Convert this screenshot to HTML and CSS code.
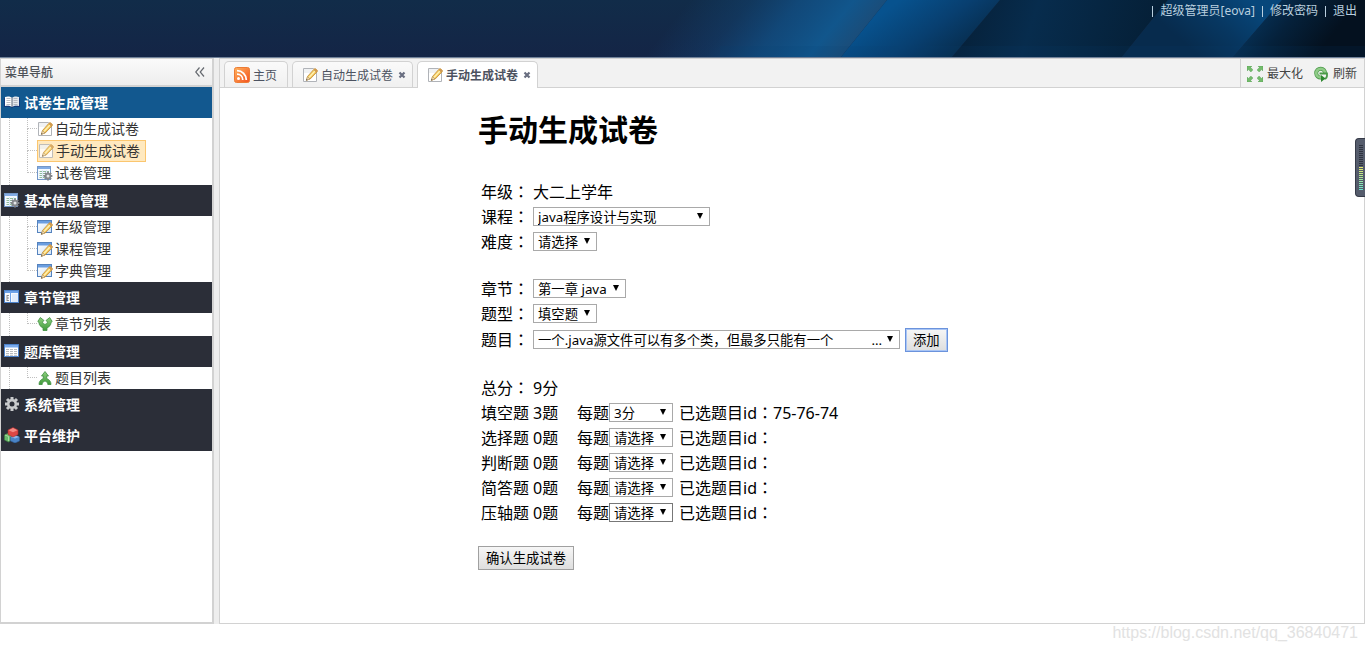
FILE: index.html
```html
<!DOCTYPE html>
<html lang="zh-CN">
<head>
<meta charset="utf-8">
<title>手动生成试卷</title>
<link rel="stylesheet" href="styles.css">
</head>
<body>
<svg class="defs" aria-hidden="true">
  <defs>
    <linearGradient id="g-pencil" x1="0" y1="0" x2="1" y2="1"><stop offset="0" stop-color="#ffe98a"/><stop offset="1" stop-color="#e9a52c"/></linearGradient>
    <linearGradient id="g-green" x1="0" y1="0" x2="0" y2="1"><stop offset="0" stop-color="#8fd07f"/><stop offset="1" stop-color="#3f9a3a"/></linearGradient>
    <linearGradient id="g-rss" x1="0" y1="0" x2="1" y2="1"><stop offset="0" stop-color="#ffb45e"/><stop offset="1" stop-color="#f4511e"/></linearGradient>
    <linearGradient id="g-win" x1="0" y1="0" x2="1" y2="1"><stop offset="0" stop-color="#ffffff"/><stop offset="1" stop-color="#cfe2f7"/></linearGradient>
    <symbol id="pencil" viewBox="0 0 16 16">
      <path d="M5.500 10.500 12 3.200c.6-.6 1.300-.6 2 0l.9.9c.6.6.6 1.200 0 1.900L8.200 13 4.500 14.200z" fill="url(#g-pencil)" stroke="#c08a35" stroke-width=".8"/>
      <path d="m7 11.500 6-6.500" stroke="#fff3b5" stroke-width="1.200"/>
      <path d="m11.500 3.800 2.700 2.700.9-1c.4-.5.4-1 0-1.400l-1.100-1.100c-.5-.5-1.100-.5-1.600 0z" fill="#d09a50"/>
      <path d="m5.500 10.700 2.500 2.200-3.700 1.500z" fill="#f3dcae" stroke="#a58a62" stroke-width=".5"/>
      <path d="m4.100 14.600.6-1.500 1 .9z" fill="#444"/>
    </symbol>
    <symbol id="i-note" viewBox="0 0 16 16">
      <path d="M1.500 1.500h10l3 3v10h-13z" fill="#fff" stroke="#b0b3b8"/>
      <path d="M2 2h9v4H2z" fill="#f0f2f4"/>
      <use href="#pencil" x="0" y="-1" width="16" height="16"/>
    </symbol>
    <symbol id="i-form" viewBox="0 0 16 16">
      <rect x=".5" y="1.500" width="14" height="12" fill="url(#g-win)" stroke="#5583be"/>
      <path d="M1 2h13v2.500H1z" fill="#6b9ee0"/>
      <use href="#pencil" x="0" y="1" width="16" height="16"/>
    </symbol>
    <symbol id="cog" viewBox="0 0 16 16">
      <g stroke="currentColor" stroke-width="3"><path d="M8 1v14M1 8h14M3 3l10 10M13 3 3 13"/></g>
      <circle cx="8" cy="8" r="5" fill="currentColor"/>
    </symbol>
    <symbol id="i-sheet" viewBox="0 0 16 16">
      <rect x=".5" y="1.500" width="13" height="13" fill="#f4f9ff" stroke="#7397c8"/>
      <path d="M1 2h12v2H1z" fill="#82ace5"/>
      <path d="M2.500 6.500h9.500M2.500 8.500h9.500M2.500 10.500h7M2.500 12.500h7" stroke="#8fbb9c"/>
      <path d="M5.500 5v9M9.500 5v9" stroke="#dce8f6"/>
      <svg x="6" y="6" width="10" height="10" viewBox="0 0 16 16" color="#84878b"><use href="#cog"/></svg>
      <circle cx="11" cy="11" r="1.500" fill="#e5e7e9"/>
    </symbol>
    <symbol id="i-book" viewBox="0 0 16 16">
      <path d="M0 4h16v9H9.500L8 14.200 6.500 13H0z" fill="#123b7c"/>
      <path d="M1 3c3-1 5-.5 7 .8V13c-2-1.300-4-1.600-7-1z" fill="#fff"/>
      <path d="M15 3c-3-1-5-.5-7 .8V13c2-1.300 4-1.600 7-1z" fill="#e4e8ee"/>
      <path d="M2.500 4.500h4M2.500 6.500h4M2.500 8.500h4M2.500 10.500h4M9.500 4.500h4M9.500 6.500h4M9.500 8.500h4M9.500 10.500h4" stroke="#a9adb5" stroke-width=".8"/>
      <path d="M8 3.500V13" stroke="#596577"/>
    </symbol>
    <symbol id="i-panes" viewBox="0 0 16 16">
      <rect x=".5" y="1.500" width="14" height="12" fill="#f5f9ff" stroke="#4d83cb"/>
      <path d="M1 2h13v2H1z" fill="#6da2e8"/><path d="M6.500 4v9" stroke="#6da2e8"/>
      <path d="M3 6v6M3 6.500h2M3 9h2M3 11.500h2" stroke="#777" stroke-width=".8"/>
      <path d="M8 5h6v8H8z" fill="#dfebfb"/>
    </symbol>
    <symbol id="i-table" viewBox="0 0 16 16">
      <rect x=".5" y="1.500" width="14" height="12" fill="#fff" stroke="#4d83cb"/>
      <path d="M1 2h13v2.500H1z" fill="#79aaec"/>
      <path d="M2 6.500h11M2 8.500h11M2 10.500h11M2 12.300h11" stroke="#a6a9ad" stroke-width=".8"/>
      <path d="M5.500 5v8M9.500 5v8" stroke="#fff"/>
    </symbol>
    <symbol id="i-split" viewBox="0 0 16 16">
      <path d="M6 14.500V11.800C3.500 10.800 2 9 2 6.500L.8 5.500 3.300 1.500 7 4.500 5.500 6c.2 1.200 1 2 2.500 2.400 1.500-.4 2.300-1.200 2.500-2.400L9 4.500l3.700-3 2.500 4L14 6.500c0 2.500-1.500 4.300-4 5.300v2.700z" fill="url(#g-green)" stroke="#3f8f40" stroke-width=".8"/>
    </symbol>
    <symbol id="i-join" viewBox="0 0 16 16">
      <path d="M8 1.500 11.500 6H9.700v2.500c2.600 1.100 4.300 3 4.300 6h-3.200c0-1.800-1.100-3-2.800-3.500-1.700.5-2.800 1.700-2.800 3.500H2c0-3 1.700-4.900 4.300-6V6H4.500z" fill="url(#g-green)" stroke="#3f8f40" stroke-width=".8"/>
    </symbol>
    <symbol id="i-gear" viewBox="0 0 16 16">
      <svg width="16" height="16" viewBox="0 0 16 16" color="#c9cbcd"><use href="#cog"/></svg>
      <circle cx="8" cy="8" r="2.500" fill="#2b2e38"/>
    </symbol>
    <symbol id="i-cubes" viewBox="0 0 16 16">
      <path d="m.5 8 4-2 3 2v5l-3 2-4-2z" fill="#69b96b" stroke="#3c843f" stroke-width=".6"/>
      <path d="m6.500 10 4.500-2 4.500 2v4L11 16l-4.500-2z" fill="#4a83c6" stroke="#2c5d9a" stroke-width=".6"/><path d="m6.800 10 4.200 1.500 4.200-1.500L11 8.300z" fill="#8eb7e8"/>
      <path d="m4 3 5-2.500L14 3v4.500l-5 2.500-5-2.500z" fill="#dc4744" stroke="#a92d30" stroke-width=".6"/><path d="m4.500 3.200 4.500 2 4.500-2L9 1z" fill="#f38a83"/>
      <path d="m1 8 3.500 1.500V14" fill="none" stroke="#b5e0ac" stroke-width=".8"/>
    </symbol>
    <symbol id="i-rss" viewBox="0 0 16 16">
      <rect x=".5" y=".5" width="15" height="15" rx="2" fill="url(#g-rss)" stroke="#ec7c35"/>
      <circle cx="4.500" cy="11.500" r="1.500" fill="#fff"/>
      <path d="M3 7.200c3.300 0 5.800 2.500 5.800 5.800M3 3.700c5.200 0 9.300 4.100 9.300 9.300" fill="none" stroke="#fff" stroke-width="1.800"/>
    </symbol>
    <symbol id="arrow-out" viewBox="0 0 6 6"><path d="M0 0h5L3.600 1.400 6 3.800 3.900 6 1.500 3.600 0 5z" fill="#74bb6c" stroke="#4c9a4c" stroke-width=".4"/></symbol>
    <symbol id="i-max" viewBox="0 0 16 16">
      <use href="#arrow-out" width="6" height="6"/>
      <use href="#arrow-out" width="6" height="6" transform="translate(16 0) rotate(90)"/>
      <use href="#arrow-out" width="6" height="6" transform="translate(16 16) rotate(180)"/>
      <use href="#arrow-out" width="6" height="6" transform="translate(0 16) rotate(270)"/>
    </symbol>
    <symbol id="i-refresh" viewBox="0 0 16 16">
      <path d="M12 7.500A4.400 4.400 0 1 0 8 11.500" fill="none" stroke="#4b9a49" stroke-width="4"/>
      <path d="M12 7.500A4.400 4.400 0 1 0 8 11.500" fill="none" stroke="#8fcb87" stroke-width="2.600"/>
      <path d="M6.500 7.500h7.500V9.500c0 1.800-1 3-2.500 3.500" fill="none" stroke="#4b9a49" stroke-width="1.800"/>
      <path d="M8 9 12.500 12.500 8 16z" fill="#2e8730"/>
    </symbol>
    <symbol id="i-close" viewBox="0 0 8 8"><path d="m1.500 1.500 5 5m0-5-5 5" stroke="#696e80" stroke-width="2.200"/></symbol>
    <symbol id="i-down" viewBox="0 0 8 8"><path d="M1 1h6L4 7z" fill="#000"/></symbol>
  </defs>
</svg>

<header class="banner">
  <svg class="banner__art" viewBox="0 0 1365 57" preserveAspectRatio="xMaxYMid slice" aria-hidden="true">
    <defs>
      <linearGradient id="b0" x1="0" y1="0" x2="0" y2="1"><stop offset="0" stop-color="#112c49"/><stop offset="1" stop-color="#142546"/></linearGradient>
      <linearGradient id="b1" gradientUnits="userSpaceOnUse" x1="690" y1="0" x2="811" y2="98"><stop offset="0" stop-color="#124c80" stop-opacity="0"/><stop offset=".3" stop-color="#124c80" stop-opacity=".35"/><stop offset=".55" stop-color="#114f84" stop-opacity=".8"/><stop offset=".82" stop-color="#11568c"/><stop offset="1" stop-color="#1b4c78"/></linearGradient>
      <linearGradient id="b2" gradientUnits="userSpaceOnUse" x1="900" y1="0" x2="945" y2="62"><stop offset="0" stop-color="#07528e"/><stop offset=".55" stop-color="#083f70"/><stop offset="1" stop-color="#072e50"/></linearGradient>
      <linearGradient id="b3" gradientUnits="userSpaceOnUse" x1="970" y1="0" x2="1150" y2="57"><stop offset="0" stop-color="#06213a"/><stop offset=".35" stop-color="#072c4d"/><stop offset="1" stop-color="#051f36"/></linearGradient>
      <linearGradient id="b4" gradientUnits="userSpaceOnUse" x1="1250" y1="0" x2="1200" y2="57"><stop offset="0" stop-color="#07477b"/><stop offset=".5" stop-color="#073761"/><stop offset="1" stop-color="#072b4d"/></linearGradient>
      <linearGradient id="b5" gradientUnits="userSpaceOnUse" x1="1262" y1="0" x2="1322" y2="48"><stop offset="0" stop-color="#06335a"/><stop offset=".45" stop-color="#05213b"/><stop offset="1" stop-color="#04111f"/></linearGradient>
    </defs>
    <path d="M0 0h1365v57H0z" fill="url(#b0)"/>
    <path d="M620 0h267l-46 57H620z" fill="url(#b1)"/>
    <path d="M887 0h113l-48 57H841z" fill="url(#b2)"/>
    <path d="M1000 0h168l-46 57H952z" fill="url(#b3)"/>
    <path d="M1168 0h114l-49 57h-111z" fill="url(#b4)"/>
    <path d="M1282 0h83v57h-132z" fill="url(#b5)"/>
    <path d="M720 46h645v11H720z" fill="#0b4370" opacity=".12"/>
  </svg>
  <nav class="account">
    <a href="#">超级管理员[eova]</a>
    <a href="#">修改密码</a>
    <a href="#">退出</a>
  </nav>
</header>

<div class="layout">
  <aside class="sidebar">
    <div class="sidebar__head">
      <span>菜单导航</span>
      <button class="collapse" type="button" aria-label="收起菜单"><svg viewBox="0 0 10 10" width="10" height="10"><path d="M4.500.5.700 5l3.800 4.500M9 .5 5.200 5 9 9.500" fill="none" stroke="#666a70" stroke-width="1.200"/></svg></button>
    </div>
    <section class="group">
      <h2 class="group__title group__title--active"><svg class="icon"><use href="#i-book"/></svg>试卷生成管理</h2>
      <ul class="tree">
        <li><a href="#"><svg class="icon"><use href="#i-note"/></svg>自动生成试卷</a></li>
        <li><a class="selected" href="#"><svg class="icon"><use href="#i-note"/></svg>手动生成试卷</a></li>
        <li><a href="#"><svg class="icon"><use href="#i-sheet"/></svg>试卷管理</a></li>
      </ul>
    </section>
    <section class="group">
      <h2 class="group__title"><svg class="icon"><use href="#i-sheet"/></svg>基本信息管理</h2>
      <ul class="tree">
        <li><a href="#"><svg class="icon"><use href="#i-form"/></svg>年级管理</a></li>
        <li><a href="#"><svg class="icon"><use href="#i-form"/></svg>课程管理</a></li>
        <li><a href="#"><svg class="icon"><use href="#i-form"/></svg>字典管理</a></li>
      </ul>
    </section>
    <section class="group">
      <h2 class="group__title"><svg class="icon"><use href="#i-panes"/></svg>章节管理</h2>
      <ul class="tree">
        <li><a href="#"><svg class="icon"><use href="#i-split"/></svg>章节列表</a></li>
      </ul>
    </section>
    <section class="group">
      <h2 class="group__title"><svg class="icon"><use href="#i-table"/></svg>题库管理</h2>
      <ul class="tree">
        <li><a href="#"><svg class="icon"><use href="#i-join"/></svg>题目列表</a></li>
      </ul>
    </section>
    <section class="group"><h2 class="group__title"><svg class="icon"><use href="#i-gear"/></svg>系统管理</h2></section>
    <section class="group"><h2 class="group__title"><svg class="icon"><use href="#i-cubes"/></svg>平台维护</h2></section>
  </aside>

  <main class="main">
    <div class="tabbar">
      <div class="tabs">
        <a class="tab" href="#"><svg class="icon"><use href="#i-rss"/></svg>主页</a>
        <a class="tab" href="#"><svg class="icon"><use href="#i-note"/></svg>自动生成试卷<svg class="close"><use href="#i-close"/></svg></a>
        <a class="tab tab--active" href="#"><svg class="icon"><use href="#i-note"/></svg>手动生成试卷<svg class="close"><use href="#i-close"/></svg></a>
      </div>
      <div class="tools">
        <button type="button"><svg class="icon"><use href="#i-max"/></svg>最大化</button>
        <button type="button"><svg class="icon"><use href="#i-refresh"/></svg>刷新</button>
      </div>
    </div>

    <form class="paper">
      <h1>手动生成试卷</h1>
      <div class="block">
        <div class="row"><span class="label">年级<span class="colon" lang="zh-TW">：</span></span>大二上学年</div>
        <div class="row"><label class="label" for="course">课程<span class="colon" lang="zh-TW">：</span></label><span class="pick pick--course"><select id="course"><option>java程序设计与实现</option></select><svg><use href="#i-down"/></svg></span></div>
        <div class="row"><label class="label" for="level">难度<span class="colon" lang="zh-TW">：</span></label><span class="pick"><select id="level"><option>请选择</option></select><svg><use href="#i-down"/></svg></span></div>
      </div>
      <div class="block block--question">
        <div class="row"><label class="label" for="chapter">章节<span class="colon" lang="zh-TW">：</span></label><span class="pick pick--chapter"><select id="chapter"><option>第一章 java</option></select><svg><use href="#i-down"/></svg></span></div>
        <div class="row"><label class="label" for="kind">题型<span class="colon" lang="zh-TW">：</span></label><span class="pick"><select id="kind"><option>填空题</option></select><svg><use href="#i-down"/></svg></span></div>
        <div class="row"><label class="label" for="question">题目<span class="colon" lang="zh-TW">：</span></label><span class="pick pick--question"><select id="question"><option>一个.java源文件可以有多个类，但最多只能有一个&nbsp;&nbsp;&nbsp;&nbsp;&nbsp;&nbsp;&nbsp;&nbsp;&nbsp;&nbsp;&nbsp;...</option></select><svg><use href="#i-down"/></svg></span><button class="btn btn--focus" type="button">添加</button></div>
      </div>
      <div class="block block--totals">
        <div class="row"><span class="label">总分<span class="colon" lang="zh-TW">：</span></span>9分</div>
        <div class="row"><span class="label">填空题</span><span class="count">3题</span><label for="s1">每题</label><span class="pick"><select id="s1"><option>3分</option></select><svg><use href="#i-down"/></svg></span><span class="ids">已选题目id<span class="colon" lang="zh-TW">：</span>75-76-74</span></div>
        <div class="row"><span class="label">选择题</span><span class="count">0题</span><label for="s2">每题</label><span class="pick"><select id="s2"><option>请选择</option></select><svg><use href="#i-down"/></svg></span><span class="ids">已选题目id<span class="colon" lang="zh-TW">：</span></span></div>
        <div class="row"><span class="label">判断题</span><span class="count">0题</span><label for="s3">每题</label><span class="pick"><select id="s3"><option>请选择</option></select><svg><use href="#i-down"/></svg></span><span class="ids">已选题目id<span class="colon" lang="zh-TW">：</span></span></div>
        <div class="row"><span class="label">简答题</span><span class="count">0题</span><label for="s4">每题</label><span class="pick"><select id="s4"><option>请选择</option></select><svg><use href="#i-down"/></svg></span><span class="ids">已选题目id<span class="colon" lang="zh-TW">：</span></span></div>
        <div class="row"><span class="label">压轴题</span><span class="count">0题</span><label for="s5">每题</label><span class="pick pick--dark"><select id="s5"><option>请选择</option></select><svg><use href="#i-down"/></svg></span><span class="ids">已选题目id<span class="colon" lang="zh-TW">：</span></span></div>
      </div>
      <button class="btn" type="button">确认生成试卷</button>
    </form>
  </main>
</div>

<footer class="credit">https://blog.csdn.net/qq_36840471</footer>
<div class="meter" aria-hidden="true"><i class="meter__off"></i><i class="meter__on"></i></div>
</body>
</html>
```
FILE: styles.css
```css
* { box-sizing: border-box; }

body {
  display: flex;
  flex-direction: column;
  min-height: 100vh;
  margin: 0;
  background: #fff;
  color: #000;
  font-family: "Noto Sans", "Noto Sans CJK SC", sans-serif;
  font-size: 16px;
}

a { color: inherit; text-decoration: none; }
button, select { font-family: inherit; color: inherit; }
h1, h2, ul { margin: 0; padding: 0; }
ul { list-style: none; }

.defs { position: absolute; width: 0; height: 0; }
.icon { flex: none; width: 16px; height: 16px; }

/* Banner */
.banner {
  position: relative;
  height: 58px;
  border-bottom: 1px solid #71829a;
  background: #122a49;
  overflow: hidden;
}
.banner__art { position: absolute; inset: 0; width: 100%; height: 100%; }
.account {
  position: relative;
  display: flex;
  justify-content: flex-end;
  padding: 2px 8px 0 0;
  color: #b9cfdf;
  font-size: 12px;
  line-height: 18px;
}
.account a { display: flex; align-items: center; margin-left: 7px; }
.account a::before {
  content: "";
  width: 1px;
  height: 11px;
  margin-right: 7px;
  background: #b9cfdf;
}

/* Frame */
.layout { display: flex; flex: 1; background: #eee; }

.sidebar {
  flex: none;
  width: 214px;
  border: solid #d2d2d2;
  border-width: 1px 2px 2px 1px;
  background: #fff;
}
.sidebar__head {
  display: flex;
  align-items: center;
  justify-content: space-between;
  height: 28px;
  padding: 0 7px 0 4px;
  border-bottom: 2px solid #d2d2d2;
  background: linear-gradient(#fafafa, #ededed);
  color: #4e5258;
  font-size: 12px;
  font-weight: 500;
}
.collapse { display: flex; padding: 0; border: 0; background: none; }

.group__title {
  display: flex;
  align-items: center;
  gap: 4px;
  height: 31px;
  padding: 0 0 2px 3px;
  background: #2b2e38;
  color: #fff;
  font-size: 14px;
  font-weight: bold;
}
.group__title--active { background: #12588f; }

.tree {
  margin-left: 8px;
  border-left: 1px dotted #c0c0c0;
  color: #333;
  font-size: 14px;
  line-height: 20px;
}
.group:nth-of-type(odd) .tree { padding-bottom: 1px; }
.tree li {
  position: relative;
  display: flex;
  height: 22px;
  padding-left: 27px;
}
.tree li::before {
  content: "";
  position: absolute;
  top: 0;
  left: 17px;
  width: 9px;
  height: 10px;
  border: dotted #c0c0c0;
  border-width: 0 0 1px 1px;
}
.tree li:not(:last-child)::after {
  content: "";
  position: absolute;
  top: 10px;
  bottom: 0;
  left: 17px;
  border-left: 1px dotted #c0c0c0;
}
.tree a { display: flex; align-items: center; gap: 2px; }
.tree .selected {
  padding-right: 5px;
  border: 1px solid #fbc66f;
  background: #ffe9bf;
}
.tree .selected .icon { opacity: .8; }

/* Tabs */
.main {
  flex: 1;
  min-width: 0;
  margin-left: 5px;
  border: 1px solid #d2d2d2;
  background: #fff;
}
.tabbar {
  display: flex;
  justify-content: space-between;
  height: 29px;
  border-bottom: 1px solid #d2d2d2;
  background: #f2f2f2;
  color: #4c5260;
  font-size: 12px;
}
.tabs { display: flex; gap: 4px; padding: 2px 0 0 4px; }
.tab {
  display: flex;
  align-items: center;
  gap: 3px;
  height: 26px;
  padding: 0 10px 0 9px;
  border: 1px solid #d2d2d2;
  border-bottom: 0;
  border-radius: 5px 5px 0 0;
  background: linear-gradient(#fafafa, #f0f0f0);
  white-space: nowrap;
}
.tab:not(:first-child) { padding-right: 6px; }
.tab--active { height: 27px; background: #fff; font-weight: bold; }
.close { width: 8px; height: 8px; margin-left: 2px; }
.tools {
  display: flex;
  align-items: center;
  gap: 10px;
  padding: 2px 7px 0 6px;
  border-left: 1px solid #d2d2d2;
}
.tools button {
  display: flex;
  align-items: center;
  gap: 4px;
  padding: 0;
  border: 0;
  background: none;
  color: #444;
  font-size: 12px;
  line-height: 18px;
}

/* Paper form */
.paper {
  max-width: 628px;
  margin: 0 auto;
  padding-top: 22px;
}
.paper h1 {
  margin-bottom: 30px;
  font-size: 30px;
  line-height: 40px;
}
.block { margin-bottom: 22px; padding-left: 3px; }
.block--question { margin-bottom: 23px; }
.block--totals { margin-bottom: 20px; }
.row {
  display: flex;
  align-items: center;
  min-height: 25px;
  line-height: 25px;
  white-space: nowrap;
}
.label { width: 52px; }
.count { width: 44px; }
.ids { margin-left: 6px; }
.colon { font-family: "Noto Sans CJK TC", sans-serif; line-height: 1; }

.pick {
  position: relative;
  display: flex;
  width: 64px;
  height: 19px;
  margin-bottom: 2px;
}
.pick--course { width: 177px; }
.pick--chapter { width: 93px; }
.pick--question { width: 367px; }
.pick select {
  width: 100%;
  padding: 0 16px 0 4px;
  border: 1px solid #a9a9a9;
  border-radius: 0;
  background: #fff;
  appearance: none;
}
.pick--dark select { border-color: #777; }
.pick svg {
  position: absolute;
  top: 5px;
  right: 6px;
  width: 8px;
  height: 8px;
  pointer-events: none;
}

.btn {
  height: 24px;
  padding: 0 7px;
  border: 1px solid #a0a0a0;
  border-radius: 0;
  background: linear-gradient(#f6f6f6, #dedede);
  line-height: 20px;
}
.btn--focus {
  margin: 1px 0 1px 5px;
  border-color: #6b93dc;
  box-shadow: inset 0 0 0 1px #a9c5f5;
}

.credit {
  height: 27px;
  padding-right: 7px;
  color: #e2e2e2;
  font-family: "Liberation Sans", sans-serif;
  font-size: 16px;
  line-height: 18px;
  text-align: right;
}

/* Level meter docked to the window edge */
.meter {
  position: absolute;
  top: 138px;
  right: 0;
  width: 10px;
  height: 59px;
  padding: 6px 2px 0 3px;
  border: 1px solid #363b48;
  border-right: 0;
  border-radius: 4px 0 0 4px;
  background: #555c6c;
}
.meter i { display: block; }
.meter__off { height: 22px; background: repeating-linear-gradient(#2e333f 0 1px, #555c6c 1px 2px); }
.meter__on {
  height: 24px;
  background:
    repeating-linear-gradient(transparent 0 1px, #555c6c 1px 2px),
    linear-gradient(#e6ec6a, #62e6d4);
}
```
